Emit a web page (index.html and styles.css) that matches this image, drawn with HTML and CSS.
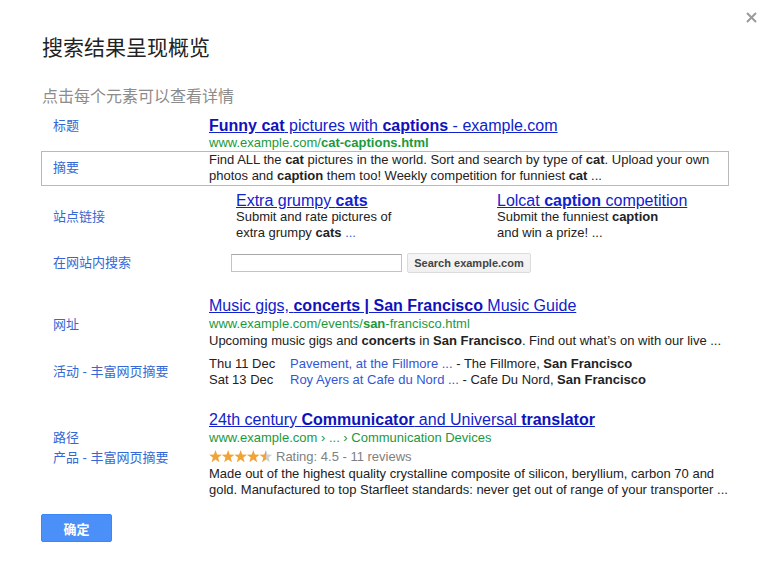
FILE: index.html
```html
<!DOCTYPE html>
<html lang="zh-CN">
<head>
<meta charset="utf-8">
<title>搜索结果呈现概览</title>
<link rel="stylesheet" href="styles.css">
</head>
<body>
<div class="dialog">
  <button class="close" aria-label="关闭">
    <svg width="11" height="11" viewBox="0 0 11 11"><path d="M1 1 L10 10 M10 1 L1 10" stroke="#9a9a9a" stroke-width="2" fill="none"/></svg>
  </button>
  <h1 class="heading">搜索结果呈现概览</h1>
  <p class="subtitle">点击每个元素可以查看详情</p>

  <div class="anatomy">
    <div class="row">
      <div class="label">标题</div>
      <div class="content"><a class="r-title" href="#"><b>Funny cat</b> pictures with <b>captions</b> - example.com</a></div>
    </div>
    <div class="row">
      <div class="label"></div>
      <div class="content url">www.example.com/<b>cat-captions.html</b></div>
    </div>
    <div class="row row-boxed">
      <div class="label">摘要</div>
      <div class="content snippet">Find ALL the <b>cat</b> pictures in the world. Sort and search by type of <b>cat</b>. Upload your own<br>photos and <b>caption</b> them too! Weekly competition for funniest <b>cat</b> ...</div>
    </div>
    <div class="row row-sitelinks">
      <div class="label">站点链接</div>
      <div class="content sitelinks">
        <div class="sitelink">
          <a class="sl-title" href="#">Extra grumpy <b>cats</b></a>
          <div class="sl-desc">Submit and rate pictures of<br>extra grumpy <b>cats</b> <span class="more">...</span></div>
        </div>
        <div class="sitelink">
          <a class="sl-title" href="#">Lolcat <b>caption</b> competition</a>
          <div class="sl-desc">Submit the funniest <b>caption</b><br>and win a prize! ...</div>
        </div>
      </div>
    </div>
    <div class="row row-search">
      <div class="label">在网站内搜索</div>
      <div class="content search">
        <span class="search-input"></span>
        <span class="search-btn">Search example.com</span>
      </div>
    </div>

    <div class="row row-result2">
      <div class="label label-url">网址</div>
      <div class="content">
        <a class="r-title" href="#">Music gigs, <b>concerts | San Francisco</b> Music Guide</a>
        <div class="url url-tall">www.example.com/events/<b>san</b>-francisco.html</div>
        <div class="snippet snippet-gap">Upcoming music gigs and <b>concerts</b> in <b>San Francisco</b>. Find out what’s on with our live ...</div>
      </div>
    </div>
    <div class="row row-events">
      <div class="label">活动 - 丰富网页摘要</div>
      <div class="content events">
        <span class="date">Thu 11 Dec</span><span><a class="ev-link" href="#">Pavement, at the Fillmore ...</a> - The Fillmore, <b>San Francisco</b></span>
        <span class="date">Sat 13 Dec</span><span><a class="ev-link" href="#">Roy Ayers at Cafe du Nord ...</a> - Cafe Du Nord, <b>San Francisco</b></span>
      </div>
    </div>

    <div class="row row-result3">
      <div class="label"></div>
      <div class="content"><a class="r-title" href="#">24th century <b>Communicator</b> and Universal <b>translator</b></a></div>
    </div>
    <div class="row">
      <div class="label label-tall">路径</div>
      <div class="content url url-tall">www.example.com › ... › Communication Devices</div>
    </div>
    <div class="row">
      <div class="label label-tall label-down">产品 - 丰富网页摘要</div>
      <div class="content rating">
        <svg class="stars" width="64" height="13" viewBox="0 0 64 13">
          <defs>
            <linearGradient id="half" x1="0" x2="1" y1="0" y2="0">
              <stop offset="0.5" stop-color="#f0a336"/>
              <stop offset="0.5" stop-color="#cfcfcf"/>
            </linearGradient>
            <polygon id="star" points="6.5,0.1 8.1,4.6 12.9,4.7 9.1,7.6 10.4,12.3 6.5,9.5 2.6,12.3 3.9,7.6 0.1,4.7 4.9,4.6"/>
          </defs>
          <use href="#star" x="0" fill="#f0a336"/>
          <use href="#star" x="12.6" fill="#f0a336"/>
          <use href="#star" x="25.2" fill="#f0a336"/>
          <use href="#star" x="37.8" fill="#f0a336"/>
          <use href="#star" x="50.4" fill="url(#half)"/>
        </svg>
        <span class="rating-text">Rating: 4.5 - 11 reviews</span>
      </div>
    </div>
    <div class="row">
      <div class="label"></div>
      <div class="content snippet">Made out of the highest quality crystalline composite of silicon, beryllium, carbon 70 and<br>gold. Manufactured to top Starfleet standards: never get out of range of your transporter ...</div>
    </div>
  </div>

  <button class="ok">确定</button>
</div>
</body>
</html>
```

FILE: styles.css
```css
html, body {
  margin: 0;
  padding: 0;
  background: #fff;
}

body {
  font-family: "Liberation Sans", "Noto Sans CJK SC", sans-serif;
  color: #222;
}

.dialog {
  position: relative;
  padding: 34px 43px 0 41px;
  width: 772px;
  box-sizing: border-box;
}

.close {
  position: absolute;
  top: 12px;
  right: 15px;
  width: 11px;
  height: 11px;
  padding: 0;
  border: 0;
  background: none;
  line-height: 0;
}

.heading {
  margin: 0 0 0 1px;
  font-size: 21px;
  line-height: 24px;
  font-weight: normal;
  color: #222;
  font-family: "Noto Sans CJK SC", sans-serif;
}

.subtitle {
  margin: 27px 0 0 1px;
  font-size: 16px;
  line-height: 20px;
  color: #8c8c8c;
  font-family: "Noto Sans CJK SC", sans-serif;
}

.anatomy {
  margin-top: 11px;
}

.row {
  display: flex;
  align-items: center;
}

.label {
  flex: 0 0 168px;
  box-sizing: border-box;
  padding-left: 12px;
  font-size: 13px;
  line-height: 16px;
  color: #3568d4;
  font-family: "Liberation Sans", "Noto Sans CJK SC", sans-serif;
  white-space: nowrap;
}

.content {
  flex: 1;
  min-width: 0;
  white-space: nowrap;
}

.r-title {
  display: block;
  font-size: 16px;
  line-height: 19px;
  color: #1122cc;
  text-decoration: underline;
}

.r-title b {
  color: #1111bb;
}

.url {
  font-size: 13px;
  line-height: 16px;
  color: #1a9a3c;
}

.url-tall {
  line-height: 17px;
}

.snippet {
  font-size: 13px;
  line-height: 16px;
  color: #222;
}

.snippet-gap {
  margin-top: 1px;
}

.row-boxed {
  box-shadow: inset 0 0 0 1px #b9b9b9;
  padding: 1px 0 2px;
}

.row-sitelinks {
  margin-top: 6px;
}

.sitelinks {
  display: flex;
  padding-left: 27px;
}

.sitelink {
  flex: 0 0 261px;
}

.sl-title {
  display: block;
  font-size: 16px;
  line-height: 17px;
  color: #1122cc;
  text-decoration: underline;
}

.sl-desc {
  font-size: 13px;
  line-height: 16px;
  color: #222;
}

.more {
  color: #3a5fd8;
}

.row-search {
  margin-top: 12px;
}

.search {
  display: flex;
  align-items: center;
  padding-left: 22px;
}

.search-input {
  display: block;
  width: 171px;
  height: 18px;
  box-sizing: border-box;
  border: 1px solid #c4c4c4;
  border-top-color: #a8a8a8;
  background: #fff;
}

.search-btn {
  display: block;
  margin-left: 5px;
  width: 124px;
  height: 20px;
  box-sizing: border-box;
  border: 1px solid #dcdcdc;
  border-radius: 2px;
  background: linear-gradient(#f6f6f6, #f0f0f0);
  font-size: 11px;
  line-height: 18px;
  font-weight: bold;
  color: #444;
  text-align: center;
}

.row-result2 {
  margin-top: 23px;
}

.label-url {
  padding-top: 5px;
}

.row-events {
  margin-top: 7px;
}

.events {
  display: grid;
  grid-template-columns: 81px auto;
  font-size: 13px;
  line-height: 16px;
  color: #222;
}

.ev-link {
  color: #3157d6;
  text-decoration: none;
}

.row-result3 {
  margin-top: 22px;
}

.label-tall {
  line-height: 17px;
}

.label-down {
  padding-top: 3px;
}

.rating {
  display: flex;
  align-items: center;
  height: 17px;
}

.stars {
  display: block;
}

.rating-text {
  margin-left: 3px;
  font-size: 13px;
  line-height: 17px;
  color: #808080;
}

.ok {
  display: block;
  margin-top: 16px;
  width: 71px;
  height: 28px;
  box-sizing: border-box;
  border: 1px solid #3d86f5;
  border-radius: 2px;
  background: #4b8ff8;
  color: #fff;
  font-size: 13px;
  font-weight: bold;
  font-family: "Noto Sans CJK SC", sans-serif;
  padding: 0;
}
```
